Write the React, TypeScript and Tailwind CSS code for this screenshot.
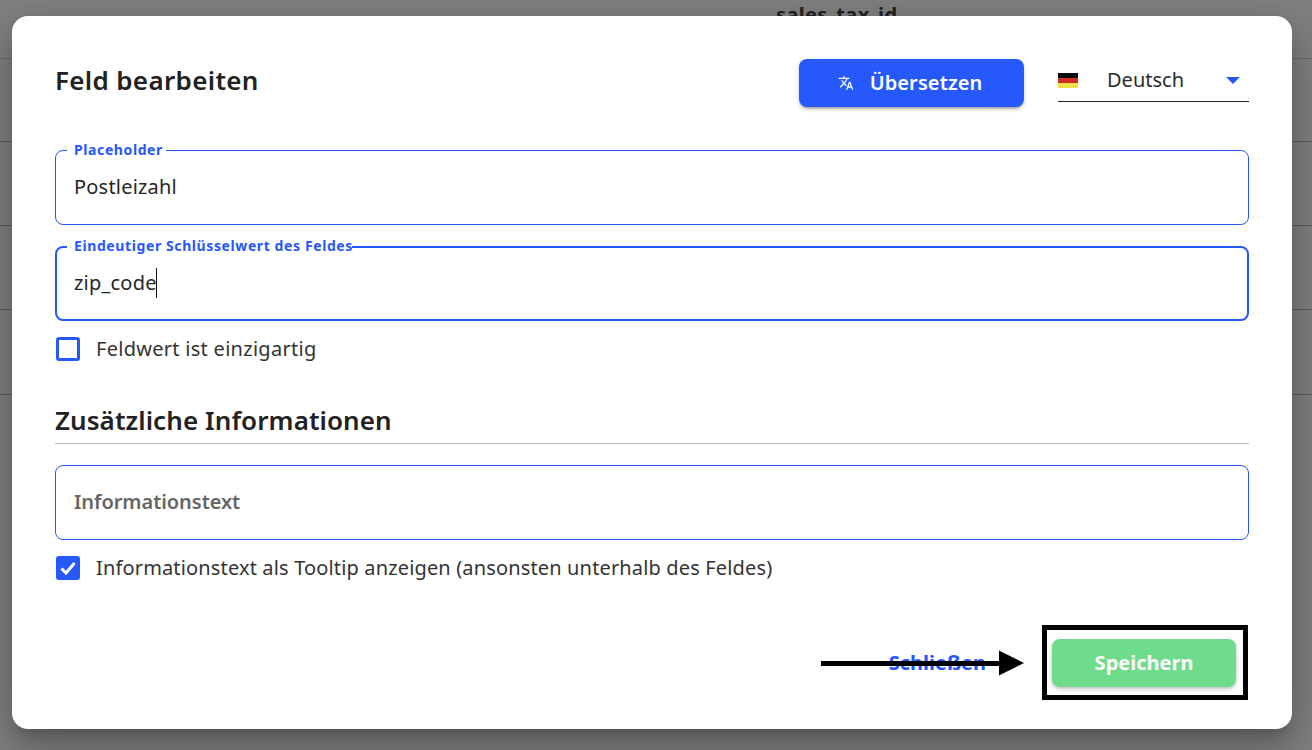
import React from "react";

function Field({ label, value, placeholder, focused, caret, mt }: { label?: string; value?: string; placeholder?: string; focused?: boolean; caret?: boolean; mt: string }) {
  return (
    <div className={`relative h-[75px] rounded-[8px] border-[#2658fb] ${focused ? "border-2 px-[17px]" : "border px-[18px]"} flex items-center ${mt}`}>
      {label && (
        <span className={`absolute ${focused ? "left-[17px] -top-[11px]" : "left-[18px] -top-[10px]"} text-[14px] leading-[18px] font-bold tracking-[0.6px] text-[#2658fb]`}>
          <span className="relative z-10">{label}</span>
          <span className={`absolute ${focused ? "left-[-7px] right-[1px] top-[8px] h-[5px]" : "left-[-7px] right-[-3px] top-[6px] h-[4px]"} bg-white`} />
        </span>
      )}
      {value && (
        <span className="relative -mt-[2px] text-[20px] leading-[28px] tracking-[0.2px] text-[#262626]">
          {value}
          {caret && <span className="absolute right-0 -top-[1px] h-[30px] w-px bg-[#111]" />}
        </span>
      )}
      {placeholder && <span className="-mt-[2px] text-[20px] leading-[28px] font-semibold tracking-[-0.05px] text-[#666666]">{placeholder}</span>}
    </div>
  );
}

export default function App() {
  return (
    <div className="relative h-[750px] w-[1312px] overflow-hidden bg-[#808080] font-['Noto_Sans','Liberation_Sans',sans-serif]">
      <div className="h-[59px] border-b border-[#6a6a6a]">
        <div className="pl-[776px] pt-[3px] text-[20px] leading-[24px] font-bold tracking-[0.35px] text-[#222]">sales_tax_id</div>
      </div>
      <div className="h-[83px] border-b border-[#5e5e5e]" />
      <div className="h-[84px] border-b border-[#5e5e5e]" />
      <div className="h-[84px] border-b border-[#5e5e5e]" />
      <div className="h-[85px] border-b border-[#5e5e5e]" />

      <div className="absolute left-[12px] top-[16px] flex h-[713px] w-[1280px] flex-col rounded-[16px] bg-white px-[43px] shadow-[0_11px_15px_-7px_rgba(0,0,0,0.2),0_24px_38px_3px_rgba(0,0,0,0.14),0_9px_46px_8px_rgba(0,0,0,0.12)]">
        <div className="flex h-[91px] items-start pt-[43px]">
          <h1 className="mt-[3px] text-[26px] leading-[36px] font-semibold tracking-[0.33px] text-[#222]">Feld bearbeiten</h1>
          <button className="ml-auto flex h-[48px] w-[225px] items-center justify-center rounded-[8px] bg-[#2658fb] pr-[3px] text-[20px] font-semibold tracking-[0.1px] text-white shadow-[0_3px_3px_-2px_rgba(0,0,0,0.3),0_2px_4px_rgba(0,0,0,0.2)]">
            <svg className="mr-[16px] h-[16px] w-[16px]" viewBox="0 0 24 24" fill="white">
              <path d="M12.87 15.07l-2.54-2.51.03-.03A17.52 17.52 0 0014.07 6H17V4h-7V2H8v2H1v2h11.17C11.5 7.92 10.44 9.75 9 11.35 8.07 10.32 7.3 9.19 6.69 8h-2c.73 1.63 1.73 3.17 2.98 4.56l-5.09 5.02L4 19l5-5 3.11 3.11.76-2.04zM18.5 10h-2L12 22h2l1.12-3h4.75L21 22h2l-4.5-12zm-2.62 7l1.62-4.33L19.12 17h-3.24z" />
            </svg>
            Übersetzen
          </button>
          <div className="relative ml-[34px] flex h-[43px] w-[191px] items-center border-b border-[#222]">
            <div className="flex h-[15px] w-[20px] flex-col">
              <div className="h-[5px] bg-[#0a0a0a]" />
              <div className="h-[5px] bg-[#cf2e22]" />
              <div className="h-[5px] bg-[#efe24a]" />
            </div>
            <span className="ml-[29px] -mt-[1px] text-[20px] leading-[28px] text-[#2b2b2b]">Deutsch</span>
            <svg className="absolute right-[9px] top-[18px] h-[7px] w-[14px]" viewBox="0 0 14 7">
              <path d="M0 0h14L7 7z" fill="#2658fb" />
            </svg>
          </div>
        </div>

        <Field mt="mt-[43px]" label="Placeholder" value="Postleizahl" />
        <Field mt="mt-[21px]" label="Eindeutiger Schlüsselwert des Feldes" value="zip_code" caret focused />

        <label className="mt-[16px] flex h-[24px] items-center pl-px">
          <span className="h-[24px] w-[24px] rounded-[3px] border-[3px] border-[#2658fb]" />
          <span className="ml-[16px] text-[20px] leading-[24px] tracking-[0.28px] text-[#333]">Feldwert ist einzigartig</span>
        </label>

        <h2 className="mt-[42px] border-b border-[#b4b8c8] pb-[6px] text-[26px] leading-[34px] font-semibold tracking-[0.08px] text-[#222]">Zusätzliche Informationen</h2>

        <Field mt="mt-[21px]" placeholder="Informationstext" />

        <label className="mt-[16px] flex h-[24px] items-center pl-px">
          <span className="flex h-[24px] w-[24px] items-center justify-center rounded-[3px] bg-[#2658fb]">
            <svg className="h-[18px] w-[18px]" viewBox="0 0 18 18" fill="none" stroke="white" strokeWidth="3">
              <path d="M2.5 9.5l4.5 4.5 8.5-10" />
            </svg>
          </span>
          <span className="ml-[16px] text-[20px] leading-[24px] tracking-[0.15px] text-[#333]">Informationstext als Tooltip anzeigen (ansonsten unterhalb des Feldes)</span>
        </label>

        <div className="mt-[59px] flex items-center justify-end pr-[13px]">
          <span className="mr-[66px] text-[20px] font-bold text-[#2658fb]">Schließen</span>
          <button className="h-[48px] w-[184px] rounded-[8px] bg-[#6edc8b] text-[20px] font-bold text-white shadow-[0_2px_4px_rgba(0,0,0,0.25)]">Speichern</button>
        </div>
      </div>

      <div className="absolute left-[1042px] top-[625px] h-[75px] w-[206px] border-[5px] border-black" />
      <svg className="absolute left-[821px] top-[650px] h-[26px] w-[204px]" viewBox="0 0 204 26">
        <path d="M0 11h180v5H0z" fill="black" />
        <path d="M178 0.5l25 12.5-25 12.5z" fill="black" />
      </svg>
    </div>
  );
}
